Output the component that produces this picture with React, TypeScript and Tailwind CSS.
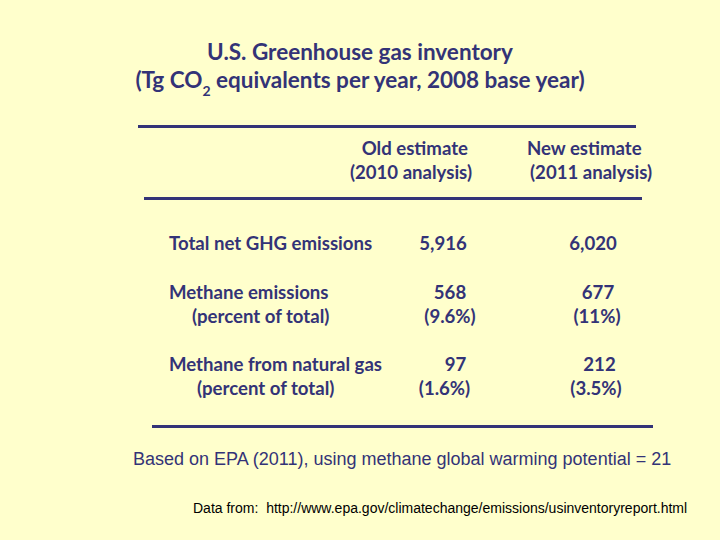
import React from "react";

const navy = "text-[#333377]";

export default function App() {
  return (
    <div className="w-[720px] h-[540px] bg-[#ffffcc] flex flex-col overflow-hidden" style={{ fontFamily: "Lato, 'Open Sans', sans-serif" }}>
      <div className={`mt-[38px] flex flex-col items-center font-bold text-[22.5px] leading-[28px] ${navy}`}>
        <div>U.S. Greenhouse gas inventory</div>
        <div>
          (Tg CO<sub className="text-[14px] leading-none align-[-4px]">2</sub> equivalents per year, 2008 base year)
        </div>
      </div>

      <div className="mt-[31px] ml-[138px] w-[498px] h-[3px] bg-[#333377]" />

      <div className={`mt-[8px] flex font-bold text-[18.6px] leading-[24px] ${navy}`}>
        <div className="ml-[340px] w-[132px] flex flex-col items-end">
          <div className="pr-[4px]">Old estimate</div>
          <div>(2010 analysis)</div>
        </div>
        <div className="ml-[55px] w-[150px] flex flex-col">
          <div>New estimate</div>
          <div className="pl-[3px]">(2011 analysis)</div>
        </div>
      </div>

      <div className="mt-[13px] ml-[144px] w-[498px] h-[3px] bg-[#333377]" />

      <div className={`flex flex-col font-bold text-[18.6px] leading-[24px] ${navy}`}>
        <div className="mt-[31px] flex">
          <div className="ml-[169px] w-[231px]">Total net GHG emissions</div>
          <div className="w-[100px] text-center pr-[14px]">5,916</div>
          <div className="ml-[47px] w-[100px] text-center pr-[8px]">6,020</div>
        </div>
        <div className="mt-[25px] flex">
          <div className="ml-[169px] w-[231px] flex flex-col">
            <div>Methane emissions</div>
            <div className="pl-[23px]">(percent of total)</div>
          </div>
          <div className="w-[100px] flex flex-col items-center">
            <div>568</div>
            <div>(9.6%)</div>
          </div>
          <div className="ml-[47px] w-[100px] flex flex-col items-center">
            <div className="pl-[2px]">677</div>
            <div>(11%)</div>
          </div>
        </div>
        <div className="mt-[24px] flex">
          <div className="ml-[169px] w-[231px] flex flex-col">
            <div>Methane from natural gas</div>
            <div className="pl-[28px]">(percent of total)</div>
          </div>
          <div className="w-[100px] flex flex-col items-center">
            <div className="pl-[11px]">97</div>
            <div className="pr-[11px]">(1.6%)</div>
          </div>
          <div className="ml-[47px] w-[100px] flex flex-col items-center">
            <div className="pl-[5px]">212</div>
            <div className="pr-[2px]">(3.5%)</div>
          </div>
        </div>
      </div>

      <div className="mt-[25px] ml-[152px] w-[501px] h-[3px] bg-[#333377]" />

      <div className={`mt-[20px] pl-[133px] text-[18px] leading-[22px] whitespace-nowrap ${navy}`} style={{ fontFamily: "'Liberation Sans', Arial, sans-serif" }}>
        Based on EPA (2011), using methane global warming potential = 21
      </div>

      <div className="mt-[29px] pl-[193px] text-[14px] leading-[18px] text-black whitespace-pre" style={{ fontFamily: "'Liberation Sans', Arial, sans-serif" }}>
        {"Data from:  http://www.epa.gov/climatechange/emissions/usinventoryreport.html"}
      </div>
    </div>
  );
}
